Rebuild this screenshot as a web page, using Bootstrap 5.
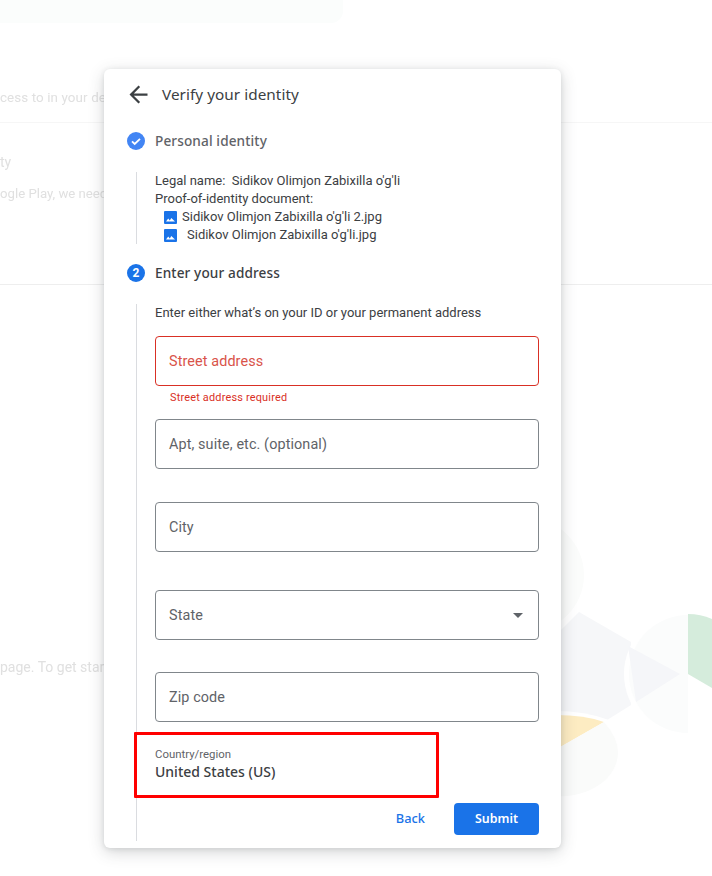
<!DOCTYPE html>
<html lang="en">
<head>
<meta charset="utf-8">
<title>Verify your identity</title>
<link href="https://cdn.jsdelivr.net/npm/bootstrap@5.3.0/dist/css/bootstrap.min.css" rel="stylesheet">
<style>
html,body{height:100%}
body{width:712px;height:876px;overflow:hidden;background:#fff;font-family:Roboto,"Liberation Sans",sans-serif;position:relative;color:#3c4043}
.bg-art{position:absolute;left:0;top:0}
.bg-strip{height:23px;width:343px;background:#fbfdfc;border-bottom-right-radius:12px}
.bg-page{color:#e0e0e0;font-size:14px;line-height:20px;height:876px;overflow:hidden;filter:blur(.4px)}
.bg-t1{margin-top:65px;height:34px;white-space:nowrap;font-size:13.4px;letter-spacing:.1px}
.bg-rule1{height:1px;background:#f6f6f6}
.bg-t2{margin-top:29px;white-space:nowrap}
.bg-t3{margin-top:12px;white-space:nowrap;font-size:13.2px}
.bg-rule2{height:1px;background:#eee;margin-top:80px}
.bg-t4{margin-top:372px;white-space:nowrap}
.verify-dialog{position:absolute;left:104px;top:69px;width:457px;height:779px;background:#fff;border-radius:6px;box-shadow:0 4px 16px rgba(60,64,67,.22),0 1px 5px rgba(60,64,67,.12);padding:0 22px 0 23px}
.dlg-head{height:50px;gap:10px}
.dlg-back{margin-left:-2px}
.dlg-title{font-family:"Noto Sans",Roboto,sans-serif;font-size:15.3px;color:#3c4043;margin:0;font-weight:400;letter-spacing:.05px}
.step-head{gap:10px;height:20px;font-family:"Noto Sans",Roboto,sans-serif;font-size:13.6px;font-weight:500;letter-spacing:.12px}
.step-done{margin-top:12px;color:#5f6368}
.step-now{margin-top:19px;color:#3c4043}
.step-dot{width:18px;height:18px;border-radius:50%;background:#1a73e8;color:#fff;font:700 12px/18px Roboto,sans-serif;text-align:center;flex:none}
.rail-a{margin:21px 0 0 9px;height:72px;border-left:1px solid #dadce0;padding-left:18px;font-size:13px;line-height:18px;color:#3c4043;white-space:pre}
.file-row{padding-left:9px;height:18px;gap:5px}
.file-pad{margin-left:5px}
.rail-b{margin:21px 0 0 9px;height:537px;border-left:1px solid #dadce0;padding-left:18px;position:relative}
.addr-hint{font-size:13px;line-height:18px;margin:0;color:#3c4043}
.out-field{height:50px;width:384px;border:1px solid #80868b;border-radius:4px;padding:2px 13px 0;font-size:14.4px;color:#5f6368;letter-spacing:.1px;background:#fff}
.f-street{margin-top:14px;border-color:#d93025;color:#d9534a}
.field-err{font-size:10.9px;line-height:14px;color:#d93025;padding:5px 0 0 15px;height:33px;letter-spacing:.2px}
.f-city{margin-top:33px}
.f-state{margin-top:38px}
.f-zip{margin-top:32px}
.caret-down{width:0;height:0;border-left:5px solid transparent;border-right:5px solid transparent;border-top:5px solid #5f6368;margin:-2px 2px 0 0}
.country-lbl{font-size:11.4px;line-height:14px;color:#5f6368;margin-top:25px}
.country-val{font-family:"Noto Sans",Roboto,sans-serif;font-size:14px;line-height:18px;font-weight:500;color:#3c4043;margin-top:2px}
.act-row{margin-top:22px;width:384px;gap:29px}
.act-back{font-family:"Noto Sans",Roboto,sans-serif;font-size:12.8px;font-weight:500;color:#1a73e8;text-decoration:none}
.act-submit{width:85px;height:32px;padding:0;background:#1a73e8;border:0;border-radius:4px;font-family:"Noto Sans",Roboto,sans-serif;font-size:12.4px;font-weight:600;color:#fff}
.note-box{position:absolute;left:-3px;top:428px;width:305px;height:66px;border:3px solid #f00;border-radius:1px}
</style>
</head>
<body>
<div class="bg-page">
  <div class="bg-strip"></div>
  <div class="bg-t1">cess to in your dev</div>
  <div class="bg-rule1"></div>
  <div class="bg-t2">ty</div>
  <div class="bg-t3">ogle Play, we need</div>
  <div class="bg-rule2"></div>
  <div class="bg-t4">page. To get star</div>
</div>
<svg class="bg-art" width="712" height="876" viewBox="0 0 712 876" aria-hidden="true">
  <circle cx="527" cy="575" r="57" fill="#fbfcfb"/>
  <polygon points="555,636 579,612 631,642 631,705 607,720 555,720" fill="#f6f7f9"/>
  <path d="M688 610 A64 64 0 0 0 688 738Z" fill="#fff"/>
  <path d="M688 615 A59 59 0 0 0 688 733Z" fill="#fbfcfc"/>
  <polygon points="628,646 680,674 636,702" fill="#f5f6f9"/>
  <path d="M688 614 A62 62 0 0 1 712 619 V688 L688 674Z" fill="#d5ecdc"/>
  <path d="M555 711 Q585 711 609 720 L555 752Z" fill="#fff"/>
  <path d="M555 715 Q585 715 604 722 L555 750Z" fill="#fdecc2"/>
  <path d="M555 750 L604 722 Q618 738 618 752 A57 44 0 0 1 555 796Z" fill="#fafbfa"/>
</svg>
<div class="verify-dialog">
  <div class="dlg-head d-flex align-items-center">
    <svg class="dlg-back" width="27" height="27" viewBox="0 0 24 24" fill="#3c4043" aria-hidden="true"><path d="M20 11H7.83l5.59-5.59L12 4l-8 8 8 8 1.41-1.41L7.83 13H20z"/></svg>
    <h1 class="dlg-title">Verify your identity</h1>
  </div>
  <div class="step-head step-done d-flex align-items-center">
    <svg width="18" height="18" viewBox="0 0 18 18" aria-hidden="true"><circle cx="9" cy="9" r="9" fill="#4285f4"/><path d="M5 9.3l2.7 2.7L13 6.8" fill="none" stroke="#fff" stroke-width="1.8"/></svg>
    <span>Personal identity</span>
  </div>
  <div class="rail-a"><div>Legal name:  Sidikov Olimjon Zabixilla o'g'li</div><div>Proof-of-identity document:</div><div class="file-row d-flex align-items-center"><svg width="13" height="13" viewBox="0 0 13 13" aria-hidden="true"><rect width="13" height="13" rx="1" fill="#1a73e8"/><path d="M2 10.5l2.2-3 1.6 2 1.5-2.4 3.7 3.4z" fill="#fff"/></svg><span>Sidikov Olimjon Zabixilla o'g'li 2.jpg</span></div><div class="file-row d-flex align-items-center"><svg width="13" height="13" viewBox="0 0 13 13" aria-hidden="true"><rect width="13" height="13" rx="1" fill="#1a73e8"/><path d="M2 10.5l2.2-3 1.6 2 1.5-2.4 3.7 3.4z" fill="#fff"/></svg><span class="file-pad">Sidikov Olimjon Zabixilla o'g'li.jpg</span></div></div>
  <div class="step-head step-now d-flex align-items-center">
    <span class="step-dot">2</span>
    <span>Enter your address</span>
  </div>
  <div class="rail-b">
    <p class="addr-hint">Enter either what’s on your ID or your permanent address</p>
    <div class="out-field f-street d-flex align-items-center">Street address</div>
    <div class="field-err">Street address required</div>
    <div class="out-field d-flex align-items-center">Apt, suite, etc. (optional)</div>
    <div class="out-field f-city d-flex align-items-center">City</div>
    <div class="out-field f-state d-flex align-items-center justify-content-between"><span>State</span><span class="caret-down"></span></div>
    <div class="out-field f-zip d-flex align-items-center">Zip code</div>
    <div class="country-lbl">Country/region</div>
    <div class="country-val">United States (US)</div>
    <div class="act-row d-flex align-items-center justify-content-end">
      <a href="#" class="act-back">Back</a>
      <button type="button" class="btn act-submit">Submit</button>
    </div>
    <div class="note-box"></div>
  </div>
</div>
<script src="https://cdn.jsdelivr.net/npm/bootstrap@5.3.0/dist/js/bootstrap.bundle.min.js"></script>
</body>
</html>
